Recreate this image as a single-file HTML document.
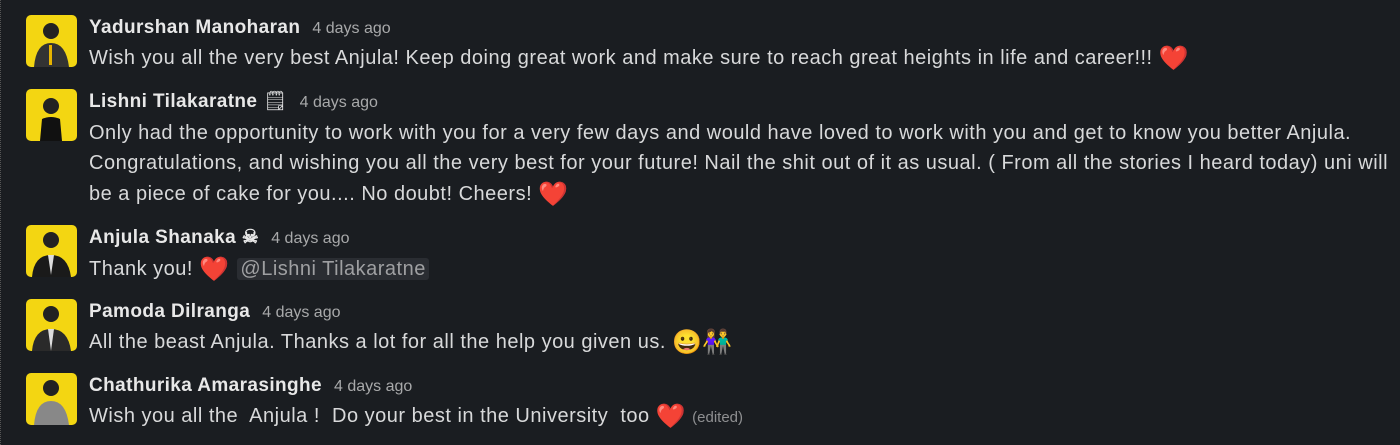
<!DOCTYPE html>
<html><head><meta charset="utf-8"><style>
body{margin:0;width:1400px;height:445px;background:#1a1d21;overflow:hidden;font-family:"Liberation Sans",sans-serif;color:#d1d2d3;position:relative}
.av{position:absolute;left:26px;width:51px;height:52px;background:#f3d612;border-radius:5px;overflow:hidden}
.name{position:absolute;left:89px;font-weight:bold;font-size:19px;letter-spacing:0.4px;color:#e8e8e8;white-space:nowrap;line-height:24px}
.ts{font-weight:normal;font-size:16px;letter-spacing:0;color:#a8a9aa;margin-left:12px}
.txt{position:absolute;left:89px;font-size:20px;letter-spacing:0.5px;white-space:nowrap;color:#d8d9da;line-height:24px}
.h{color:#e0243a;font-size:24px;line-height:20px;vertical-align:-2px}
.m{background:#2a2d32;color:#9fa0a2;padding:0 3px;border-radius:3px;margin-left:8px}
.ed{font-size:15px;letter-spacing:0;color:#8e8f91}
.bd{position:absolute;left:0;top:0;bottom:0;border-left:1px dotted #555}
</style></head><body>
<div class="bd"></div>
<div class="av" style="top:15px"><svg width="51" height="52"><circle cx="25" cy="16" r="8" fill="#222"/><path d="M8 52 Q10 28 25 28 Q40 28 43 52Z" fill="#333"/><rect x="23" y="30" width="3" height="20" fill="#e8b400"/></svg></div>
<div class="name" style="top:16px">Yadurshan Manoharan<span class="ts">4 days ago</span></div>
<div class="txt" style="top:46px">Wish you all the very best Anjula! Keep doing great work and make sure to reach great heights in life and career!!! <span class="h">❤️</span></div>

<div class="av" style="top:89px"><svg width="51" height="52"><circle cx="25" cy="17" r="8" fill="#222"/><path d="M14 52 L16 30 Q25 26 34 30 L36 52Z" fill="#111"/></svg></div>
<div class="name" style="top:90px">Lishni Tilakaratne <span style="font-weight:normal">🗒</span><span class="ts">4 days ago</span></div>
<div class="txt" style="top:121px">Only had the opportunity to work with you for a very few days and would have loved to work with you and get to know you better Anjula.</div>
<div class="txt" style="top:151px">Congratulations, and wishing you all the very best for your future! Nail the shit out of it as usual. ( From all the stories I heard today) uni will</div>
<div class="txt" style="top:182px">be a piece of cake for you.... No doubt! Cheers! <span class="h">❤️</span></div>

<div class="av" style="top:225px"><svg width="51" height="52"><circle cx="25" cy="15" r="8" fill="#222"/><path d="M6 52 Q8 30 25 30 Q42 30 45 52Z" fill="#1a1a1a"/><path d="M22 30 L25 50 L28 30Z" fill="#ddd"/></svg></div>
<div class="name" style="top:226px">Anjula Shanaka ☠<span class="ts">4 days ago</span></div>
<div class="txt" style="top:257px">Thank you! <span class="h">❤️</span><span class="m">@Lishni Tilakaratne</span></div>

<div class="av" style="top:299px"><svg width="51" height="52"><circle cx="25" cy="15" r="8" fill="#222"/><path d="M6 52 Q8 30 25 30 Q42 30 45 52Z" fill="#2a2a2a"/><path d="M22 30 L25 52 L28 30Z" fill="#ddd"/></svg></div>
<div class="name" style="top:300px">Pamoda Dilranga<span class="ts">4 days ago</span></div>
<div class="txt" style="top:330px">All the beast Anjula. Thanks a lot for all the help you given us. <span style="font-size:24px;vertical-align:-2px">😀👫</span></div>

<div class="av" style="top:373px"><svg width="51" height="52"><circle cx="25" cy="15" r="8" fill="#222"/><path d="M8 52 Q10 28 25 28 Q40 28 43 52Z" fill="#888"/></svg></div>
<div class="name" style="top:374px">Chathurika Amarasinghe<span class="ts">4 days ago</span></div>
<div class="txt" style="top:404px">Wish you all the&nbsp; Anjula !&nbsp; Do your best in the University&nbsp; too <span class="h">❤️</span> <span class="ed">(edited)</span></div>
</body></html>
